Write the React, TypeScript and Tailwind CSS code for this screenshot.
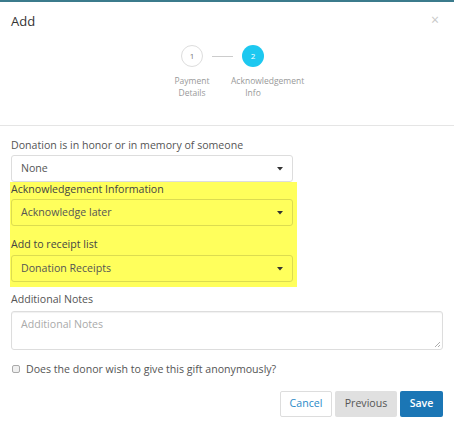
import React from 'react';

// Add donation modal - step 2 (Acknowledgement Info)

const Caret = () => (
  <svg width="6" height="4" viewBox="0 0 6 4" className="shrink-0">
    <path d="M0 0 L6 0 L3 3.5 Z" fill="#333" />
  </svg>
);

const Select = ({ value, tinted }: { value: string; tinted?: boolean }) => (
  <div
    className={`flex h-[27px] items-center justify-between rounded-[3px] border pl-[9px] pr-[9px] text-[10.6px] text-[#555] ${
      tinted ? 'border-[#dcdc50] bg-transparent' : 'border-[#ddd] bg-white'
    }`}
  >
    <span>{value}</span>
    <Caret />
  </div>
);

export default function App() {
  return (
    <div
      className="h-[428px] w-[454px] overflow-hidden bg-white text-[#555]"
      style={{ fontFamily: '"Open Sans", "Liberation Sans", sans-serif' }}
    >
      <div className="h-[2px] bg-[#3b7b8c]" />

      {/* header */}
      <div className="border-b border-[#e5e5e5] pb-[26px]">
        <div className="flex items-start justify-between pl-[11px] pr-[15px] pt-[9px]">
          <h1 className="text-[13px] leading-[20px] text-[#333]">Add</h1>
          <span className="mt-[1px] text-[14px] leading-[16px] text-[#c8c8c8]">×</span>
        </div>

        {/* steps */}
        <div className="mt-[14px] flex pl-[181px]">
          <div className="flex w-[22px] flex-col items-center">
            <div className="flex h-[22px] w-[22px] items-center justify-center rounded-full border border-[#ddd] text-[8px] text-[#777]">
              1
            </div>
            <div className="mt-[8px] w-[60px] shrink-0 text-center text-[8.5px] leading-[12px] text-[#999]">
              Payment
              <br />
              Details
            </div>
          </div>
          <div className="mx-[9px] mt-[11px] h-px w-[21px] bg-[#ccc]" />
          <div className="flex w-[22px] flex-col items-center">
            <div className="flex h-[22px] w-[22px] items-center justify-center rounded-full bg-[#1dc8f0] text-[8px] text-white">
              2
            </div>
            <div className="mt-[8px] w-[80px] shrink-0 text-center text-[8.5px] leading-[12px] text-[#999]">
              <span className="pl-[18px]">Acknowledgement</span>
              <br />
              Info
            </div>
          </div>
        </div>
      </div>

      {/* form */}
      <div className="px-[11px] pt-[11px]">
        <div className="w-[282px]">
          <label className="block text-[10.6px] leading-[16px]">Donation is in honor or in memory of someone</label>
          <div className="mt-[2px]">
            <Select value="None" />
          </div>
        </div>

        <div className="-ml-px w-[287px] bg-[#ffff5c] pb-[5px] pl-px pr-[4px]">
          <label className="block text-[10.6px] leading-[14px] text-[#444]">Acknowledgement Information</label>
          <div className="mt-[3px]">
            <Select value="Acknowledge later" tinted />
          </div>
          <label className="mt-[11px] block text-[10.6px] leading-[14px] text-[#444]">Add to receipt list</label>
          <div className="mt-[4px]">
            <Select value="Donation Receipts" tinted />
          </div>
        </div>

        <label className="mt-[5px] block text-[10.6px] leading-[14px]">Additional Notes</label>
        <div className="relative mt-[5px] h-[39px] rounded-[3px] border border-[#ddd] px-[9px] pt-[5px] text-[10.6px] leading-[14px] text-[#aaa] shadow-[inset_0_1px_1px_rgba(0,0,0,0.06)]">
          Additional Notes
          <svg width="6" height="6" viewBox="0 0 6 6" className="absolute bottom-[2px] right-[2px]">
            <path d="M1 6 L6 1 M4 6 L6 4" stroke="#999" strokeWidth="0.8" />
          </svg>
        </div>

        <div className="mt-[12px] flex items-center gap-[6px] pl-px">
          <span className="h-[8px] w-[8px] rounded-[2px] border border-[#aaa] bg-[#f0f0f0]" />
          <span className="text-[10.6px] leading-[14px]">Does the donor wish to give this gift anonymously?</span>
        </div>

        <div className="mt-[15px] flex justify-end gap-[3px]">
          <button className="h-[26px] w-[52px] rounded-[2px] border border-[#ddd] bg-white text-[10.6px] text-[#2a8ac8]">
            Cancel
          </button>
          <button className="h-[26px] w-[62px] rounded-[2px] bg-[#e0e0e0] text-[10.6px] text-[#555]">Previous</button>
          <button className="h-[26px] w-[43px] rounded-[2px] bg-[#1b76b5] text-[10.6px] font-semibold text-white">Save</button>
        </div>
      </div>
    </div>
  );
}
